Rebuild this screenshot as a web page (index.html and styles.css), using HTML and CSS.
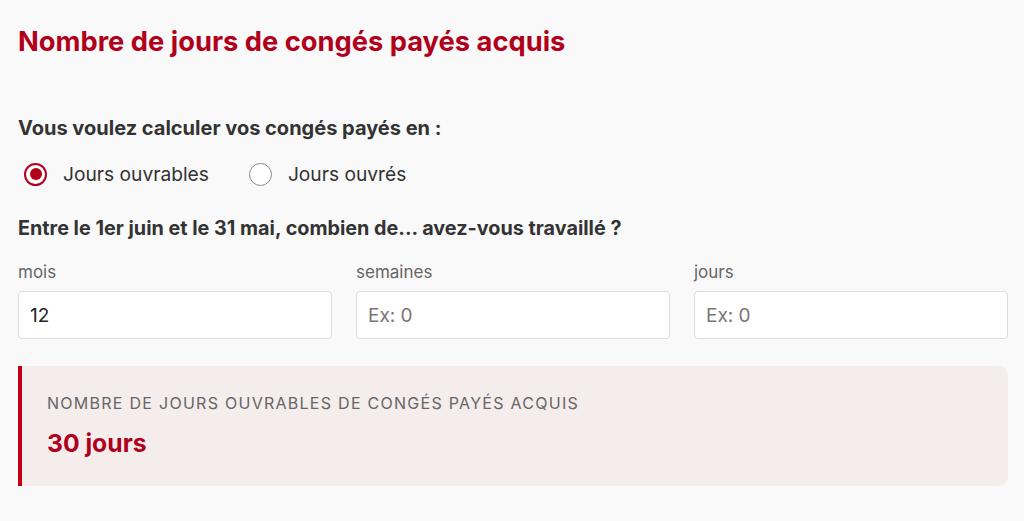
FILE: index.html
```html
<!DOCTYPE html>
<html lang="fr">
<head>
<meta charset="utf-8">
<link rel="stylesheet" href="styles.css">
</head>
<body>
<main class="page">
  <h1 class="title">Nombre de jours de congés payés acquis</h1>
  <p class="question q1">Vous voulez calculer vos congés payés en :</p>
  <div class="radios">
    <label class="radio"><span class="dot checked"></span><span>Jours ouvrables</span></label>
    <label class="radio"><span class="dot"></span><span>Jours ouvrés</span></label>
  </div>
  <p class="question q2">Entre le 1er juin et le 31 mai, combien de... avez-vous travaillé ?</p>
  <div class="fields">
    <div class="field">
      <span class="label">mois</span>
      <div class="input">12</div>
    </div>
    <div class="field">
      <span class="label">semaines</span>
      <div class="input placeholder">Ex: 0</div>
    </div>
    <div class="field">
      <span class="label">jours</span>
      <div class="input placeholder">Ex: 0</div>
    </div>
  </div>
  <div class="result">
    <div class="result-label">Nombre de jours ouvrables de congés payés acquis</div>
    <div class="result-value">30 jours</div>
  </div>
</main>
</body>
</html>
```

FILE: styles.css
```css
* { box-sizing: border-box; }
html, body { margin: 0; padding: 0; }
body {
  background: #f9f9f9;
  font-family: Inter, "Noto Sans", sans-serif;
  color: #333;
}
.page {
  padding: 25px 16px 0 18px;
}
.title {
  margin: 0;
  font-size: 27.3px;
  font-weight: 700;
  color: #b0001b;
  line-height: 34px;
}
.question {
  margin: 0;
  font-weight: 700;
  font-size: 20px;
  color: #333;
  line-height: 24px;
}
.q1 {
  margin-top: 57px;
}
.radios {
  display: flex;
  gap: 40px;
  margin-top: 22px;
  padding-left: 6px;
  font-size: 19.2px;
  color: #333;
}
.radio {
  display: flex;
  align-items: center;
  gap: 16px;
  line-height: 24px;
}
.dot {
  width: 23px;
  height: 23px;
  border-radius: 50%;
  border: 1.5px solid #8a8a8a;
  background: #fff;
  position: relative;
}
.dot.checked {
  border: 2px solid #b5001a;
}
.dot.checked::after {
  content: "";
  position: absolute;
  left: 50%;
  top: 50%;
  width: 12px;
  height: 12px;
  margin: -6px 0 0 -6px;
  border-radius: 50%;
  background: #b5001a;
}
.q2 {
  margin-top: 30px;
  font-size: 19.8px;
}
.fields {
  display: grid;
  grid-template-columns: repeat(3, 1fr);
  gap: 24px;
  margin-top: 22px;
}
.field {
  display: flex;
  flex-direction: column;
}
.label {
  font-size: 17px;
  color: #666;
  line-height: 20px;
}
.input {
  margin-top: 9px;
  height: 48px;
  background: #fff;
  border: 1px solid #dcdcdc;
  border-radius: 4px;
  padding: 0 11px;
  display: flex;
  align-items: center;
  font-size: 19px;
  color: #222;
}
.input.placeholder { color: #777; }
.result {
  margin-top: 27px;
  height: 120px;
  background: #f5ecec;
  border-left: 4px solid #c10016;
  border-radius: 0 10px 10px 0;
  padding: 27px 25px;
}
.result-label {
  text-transform: uppercase;
  font-size: 16px;
  color: #666;
  letter-spacing: 1.27px;
  line-height: 20px;
}
.result-value {
  margin-top: 16px;
  font-size: 24.7px;
  font-weight: 700;
  color: #b0001b;
  line-height: 28px;
}
```
